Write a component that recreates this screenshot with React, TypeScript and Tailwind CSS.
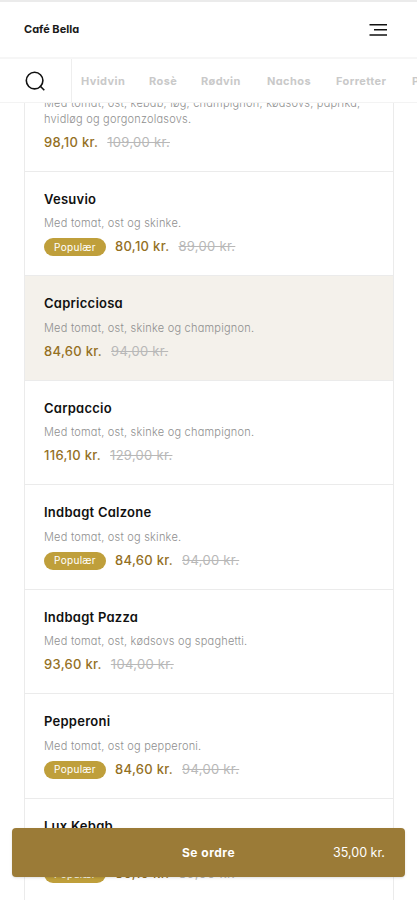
import clsx from 'clsx'

type Dish = {
  name?: string
  description: string
  price: string
  oldPrice: string
  popular?: boolean
  active?: boolean
}

const categories = [
  { label: 'Hvidvin', width: 'w-[45px]' },
  { label: 'Rosè', width: 'w-[29px]' },
  { label: 'Rødvin', width: 'w-[43px]' },
  { label: 'Nachos', width: 'w-[46px]' },
  { label: 'Forretter', width: 'w-[53px]' },
  { label: 'Pasta', width: 'w-[36px]' },
]

const dishes: Dish[] = [
  {
    description: 'Med tomat, ost, kebab, løg, champignon, kødsovs, paprika, hvidløg og gorgonzolasovs.',
    price: '98,10 kr.',
    oldPrice: '109,00 kr.',
  },
  { name: 'Vesuvio', description: 'Med tomat, ost og skinke.', price: '80,10 kr.', oldPrice: '89,00 kr.', popular: true },
  {
    name: 'Capricciosa',
    description: 'Med tomat, ost, skinke og champignon.',
    price: '84,60 kr.',
    oldPrice: '94,00 kr.',
    active: true,
  },
  { name: 'Carpaccio', description: 'Med tomat, ost, skinke og champignon.', price: '116,10 kr.', oldPrice: '129,00 kr.' },
  { name: 'Indbagt Calzone', description: 'Med tomat, ost og skinke.', price: '84,60 kr.', oldPrice: '94,00 kr.', popular: true },
  { name: 'Indbagt Pazza', description: 'Med tomat, ost, kødsovs og spaghetti.', price: '93,60 kr.', oldPrice: '104,00 kr.' },
  { name: 'Pepperoni', description: 'Med tomat, ost og pepperoni.', price: '84,60 kr.', oldPrice: '94,00 kr.', popular: true },
  { name: 'Lux Kebab', description: 'Med tomat, ost og kebab.', price: '80,10 kr.', oldPrice: '89,00 kr.', popular: true },
]

function Header() {
  return (
    <header className="flex h-[59px] shrink-0 items-center justify-between border-t-2 border-b-2 border-t-[#ebebeb] border-b-[#f6f6f6] pr-[30px] pl-6">
      <span className="text-[11px] font-bold text-[#1a1a1a]">Café Bella</span>
      <svg width="18" height="14" viewBox="0 0 18 14" fill="none" stroke="#111" strokeWidth="1.6">
        <path d="M0.5 1.7H18M5 6.8H18M0.5 12H18" />
      </svg>
    </header>
  )
}

function CategoryBar() {
  return (
    <nav className="flex h-11 shrink-0 items-stretch border-b border-[#f3f3f3] bg-white">
      <button className="flex w-[72px] shrink-0 items-center border-r border-[#eeeeee] pt-px pl-[25px]">
        <svg width="21" height="21" viewBox="0 0 21 21" fill="none" stroke="#111" strokeWidth="1.6">
          <circle cx="9.6" cy="9.6" r="8.3" />
          <path d="M14.8 14.8L19.3 19.3" />
        </svg>
      </button>
      <ul className="flex items-center gap-[23px] overflow-hidden pt-0.5 pl-[9px] text-[11px] font-bold tracking-[0.4px] text-[#c9c9c9]">
        {categories.map((c) => (
          <li key={c.label} className={clsx('shrink-0 whitespace-nowrap', c.width)}>
            {c.label}
          </li>
        ))}
      </ul>
    </nav>
  )
}

function DishRow({ dish }: { dish: Dish }) {
  return (
    <li
      className={clsx(
        'border-b border-[#ebebeb] px-[19px] pb-[18px]',
        dish.name && 'pt-[17px]',
        dish.active && 'bg-[#f4f1eb]',
      )}
    >
      {dish.name && (
        <h2 className="mb-[6.5px] text-[13px] leading-5 font-semibold tracking-[0.25px] text-[#111]">{dish.name}</h2>
      )}
      <p className="text-[11px] leading-4 font-light tracking-[0.22px] text-[#8f8f8f]">{dish.description}</p>
      <div className="mt-1.5 flex h-5 items-center text-[13px] tracking-[0.3px]">
        {dish.popular && (
          <span className="mr-[9px] flex h-[18px] w-[62px] items-center justify-center rounded-full bg-[#bf9f3b] text-[10px] text-white">
            Populær
          </span>
        )}
        <span className="font-medium text-[#94701f]">{dish.price}</span>
        <span className="ml-[9px] text-[#b8b8b8] line-through">{dish.oldPrice}</span>
      </div>
    </li>
  )
}

export default function App() {
  return (
    <div className="relative flex h-[900px] w-[417px] flex-col overflow-hidden bg-white font-['Inter','Liberation_Sans',sans-serif] [font-feature-settings:'cv11']">
      <Header />
      <CategoryBar />
      <main className="min-h-0 flex-1 overflow-hidden pr-[23px] pl-6">
        <ul className="-mt-[8.4px] h-[960px] border-x border-[#ebebeb]">
          {dishes.map((dish) => (
            <DishRow key={dish.name ?? dish.description} dish={dish} />
          ))}
        </ul>
      </main>
      <button className="absolute bottom-[23px] left-3 grid h-[49px] w-[393px] grid-cols-3 items-center rounded bg-[#9b7b37] px-5 text-white shadow-sm">
        <span className="col-start-2 text-center text-xs font-bold tracking-[0.5px]">Se ordre</span>
        <span className="pt-0.5 text-right text-[12.5px]">35,00 kr.</span>
      </button>
    </div>
  )
}
